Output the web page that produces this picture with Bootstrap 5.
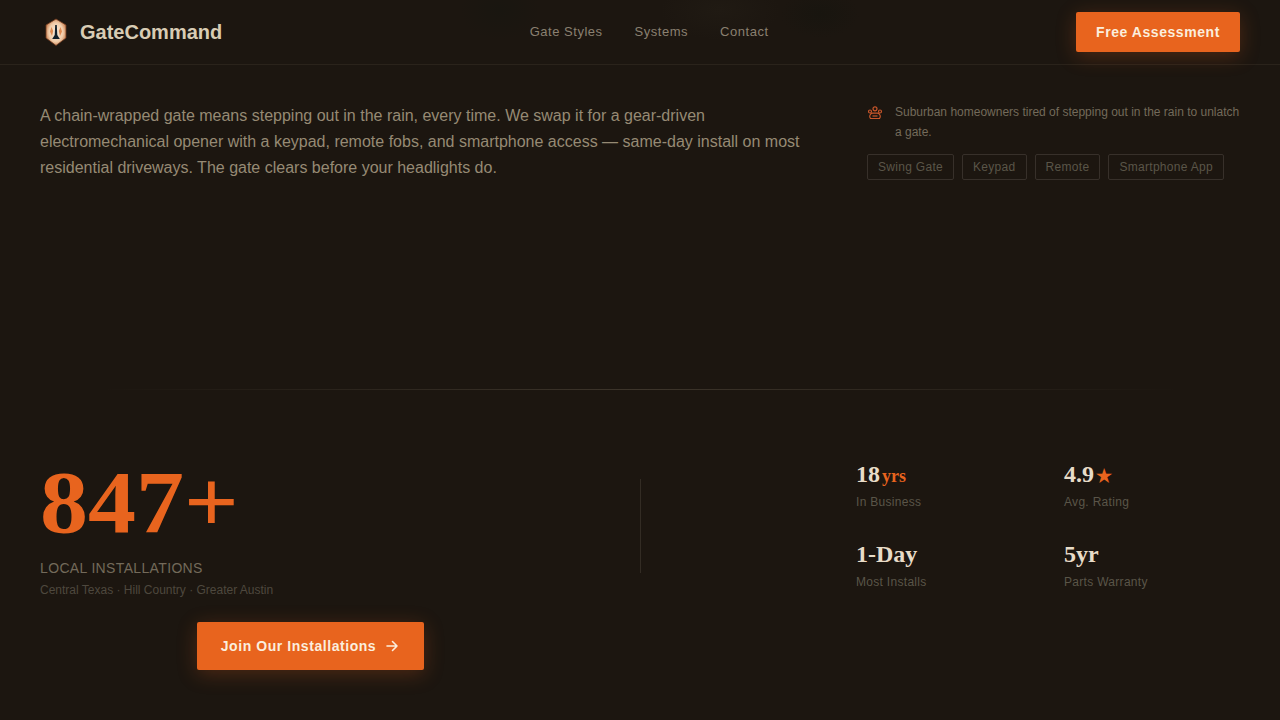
<!DOCTYPE html>
<html lang="en">
<head>
<meta charset="UTF-8">
<meta name="viewport" content="width=device-width, initial-scale=1.0">
<title>GateCommand</title>
<link href="https://cdn.jsdelivr.net/npm/bootstrap@5.3.1/dist/css/bootstrap.min.css" rel="stylesheet">
<style>
    body {
        font-family: "Liberation Sans", Arial, sans-serif;
        background-color: #1c1610;
        color: #968a74;
        height: 720px;
        overflow: hidden;
    }
    .top-bar {
        height: 65px;
        padding: 0 40px;
        border-bottom: 1px solid #2a231b;
        background:
            radial-gradient(ellipse 60px 30px at 720px 10px, #201a13, transparent),
            radial-gradient(ellipse 40px 30px at 500px 10px, #191610, transparent),
            radial-gradient(ellipse 40px 24px at 820px 14px, #18150f, transparent);
    }
    .brand-name {
        font-size: 20px;
        font-weight: 700;
        color: #d8ccb4;
    }
    .nav-items { gap: 32px; }
    .nav-items a {
        font-size: 13px;
        letter-spacing: .04em;
        color: #8a8070;
        text-decoration: none;
    }
    .btn-ember {
        background-color: #e8641e;
        color: #fbeedd;
        border: 0;
        border-radius: 2px;
        font-weight: 700;
        font-size: 14px;
        letter-spacing: .04em;
        box-shadow: 0 4px 20px rgba(232, 100, 30, .25);
    }
    .btn-ember:hover { background-color: #e8641e; color: #fbeedd; }
    .btn-head { width: 164px; height: 40px; }
    .intro-band {
        height: 324px;
        padding: 38px 40px 0;
        column-gap: 60px;
    }
    .intro-copy {
        width: 767px;
        font-size: 16px;
        line-height: 26px;
        color: #968a74;
        margin: 0;
    }
    .intro-side { width: 373px; margin-top: -1px; }
    .who-text {
        font-size: 12px;
        line-height: 20px;
        color: #736a5a;
        margin: 0;
    }
    .who-icon { width: 16px; height: 16px; margin-top: 3px; flex: none; }
    .tag-line { margin-top: 12px; gap: 8px; }
    .tag-chip {
        font-size: 12px;
        line-height: 16px;
        padding: 4px 10px;
        border: 1px solid #37302a;
        border-radius: 2px;
        color: #5a5548;
        letter-spacing: .025em;
        height: 26px;
    }
    .rule-line {
        height: 1px;
        margin: 0 40px;
        background: linear-gradient(90deg, transparent 5%, #3d352b 50%, transparent 95%);
    }
    .stats-band { padding: 71px 40px 0; }
    .proof-col { width: 541px; }
    .big-count {
        font-family: "Liberation Serif", "Times New Roman", serif;
        font-size: 96px;
        line-height: 86px;
        font-weight: 700;
        color: #e8641e;
        height: 86px;
        transform: translateY(-1px) scaleY(.92);
    }
    .count-label {
        margin-top: 11px;
        font-size: 14px;
        line-height: 20px;
        letter-spacing: .025em;
        color: #736a5a;
    }
    .count-areas {
        margin-top: 3px;
        font-size: 12px;
        line-height: 18px;
        color: #4e483e;
    }
    .btn-join {
        width: 227px;
        height: 48px;
        margin-top: 23px;
        gap: 8px;
    }
    .v-rule {
        width: 1px;
        height: 94px;
        margin: 18px 0 0 59px;
        background-color: #332c24;
    }
    .fact-grid {
        margin: -1px 0 0 215px;
        display: grid;
        grid-template-columns: 208px 176px;
        grid-auto-rows: 80px;
    }
    .fact-num {
        font-family: "Liberation Serif", "Times New Roman", serif;
        font-size: 24px;
        line-height: 28px;
        font-weight: 700;
        color: #e8dcc8;
    }
    .fact-unit { font-size: 18px; color: #e8641e; margin-left: 2px; }
    .fact-cap {
        margin-top: 3px;
        font-size: 12px;
        line-height: 18px;
        letter-spacing: .025em;
        color: #5a5548;
    }
    .fact-grid > :nth-child(n+3) .fact-cap { margin-top: 5px; }
</style>
</head>
<body>
    <nav class="top-bar d-flex align-items-center justify-content-between">
        <a class="d-flex align-items-center gap-2 text-decoration-none" href="#">
            <svg width="32" height="32" viewBox="0 0 32 32">
                <defs>
                    <radialGradient id="logoFill" cx="50%" cy="50%" r="60%">
                        <stop offset="0" stop-color="#fbeedd"/>
                        <stop offset=".6" stop-color="#f0cba8"/>
                        <stop offset="1" stop-color="#b8622f"/>
                    </radialGradient>
                </defs>
                <path d="M16 3 26 9V22L16 29.500 6 22V9Z" fill="url(#logoFill)" stroke="#6e3a1e" stroke-width=".8"/>
                <path d="M11.500 11 10 15.500 12 20 13.200 15ZM20.500 11 22 15.500 20 20 18.800 15Z" fill="#e08a50"/>
                <path d="M15.200 9H16.800L17.300 19 19.800 23H12.200L14.700 19Z" fill="#14202a"/>
            </svg>
            <span class="brand-name">GateCommand</span>
        </a>
        <div class="nav-items d-flex">
            <a href="#">Gate Styles</a>
            <a href="#">Systems</a>
            <a href="#">Contact</a>
        </div>
        <button class="btn btn-ember btn-head p-0">Free Assessment</button>
    </nav>

    <section class="intro-band d-flex">
        <p class="intro-copy">A chain-wrapped gate means stepping out in the rain, every time. We swap it for a gear-driven electromechanical opener with a keypad, remote fobs, and smartphone access — same-day install on most residential driveways. The gate clears before your headlights do.</p>
        <div class="intro-side">
            <div class="d-flex gap-2">
                <svg class="who-icon" viewBox="0 0 16 16" fill="none" stroke="#c8562a" stroke-width="1.200">
                    <circle cx="8" cy="3.800" r="2"/>
                    <circle cx="3" cy="6.500" r="1.500"/>
                    <circle cx="13" cy="6.500" r="1.500"/>
                    <path d="M3.500 13.500c-1.800-1.800-.5-4.800 2-5.300h5c2.500 .5 3.800 3.500 2 5.300Z"/>
                    <path d="M5.500 11h5"/>
                </svg>
                <p class="who-text ms-1">Suburban homeowners tired of stepping out in the rain to unlatch a gate.</p>
            </div>
            <div class="tag-line d-flex">
                <span class="tag-chip">Swing Gate</span>
                <span class="tag-chip">Keypad</span>
                <span class="tag-chip">Remote</span>
                <span class="tag-chip">Smartphone App</span>
            </div>
        </div>
    </section>

    <div class="rule-line"></div>

    <section class="stats-band d-flex">
        <div class="proof-col">
            <div class="big-count">847+</div>
            <div class="count-label">LOCAL INSTALLATIONS</div>
            <div class="count-areas">Central Texas · Hill Country · Greater Austin</div>
            <div class="d-flex justify-content-center">
                <button class="btn btn-ember btn-join p-0 d-flex align-items-center justify-content-center">
                    Join Our Installations
                    <svg width="16" height="16" viewBox="0 0 16 16" fill="none" stroke="#fbeedd" stroke-width="1.600" stroke-linecap="round" stroke-linejoin="round">
                        <path d="M3 8h10M8.500 3.500 13 8l-4.500 4.500"/>
                    </svg>
                </button>
            </div>
        </div>
        <div class="v-rule"></div>
        <div class="fact-grid">
            <div>
                <div class="fact-num">18<span class="fact-unit">yrs</span></div>
                <div class="fact-cap">In Business</div>
            </div>
            <div>
                <div class="fact-num">4.9<span class="fact-unit">★</span></div>
                <div class="fact-cap">Avg. Rating</div>
            </div>
            <div>
                <div class="fact-num">1-Day</div>
                <div class="fact-cap">Most Installs</div>
            </div>
            <div>
                <div class="fact-num">5yr</div>
                <div class="fact-cap">Parts Warranty</div>
            </div>
        </div>
    </section>

    <script src="https://cdn.jsdelivr.net/npm/bootstrap@5.3.1/dist/js/bootstrap.bundle.min.js"></script>
</body>
</html>
